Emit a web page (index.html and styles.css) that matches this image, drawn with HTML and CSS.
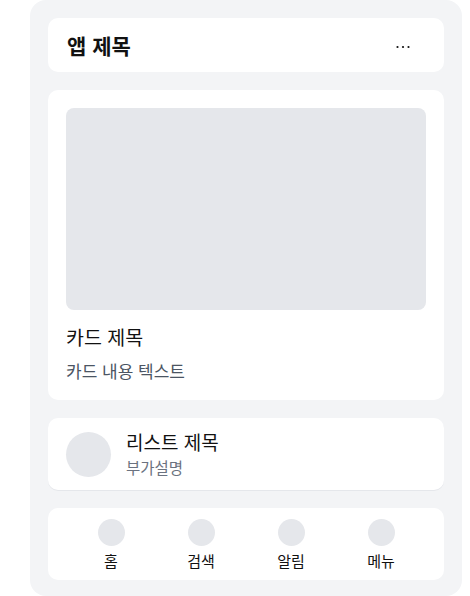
FILE: index.html
```html
<!DOCTYPE html>
<html lang="ko">
<head>
    <meta charset="UTF-8">
    <meta name="viewport" content="width=device-width, initial-scale=1.0">
    <title>앱 제목</title>
    <link rel="stylesheet" href="styles.css">
</head>
<body>
    <div class="app">
        <!-- Header -->
        <header class="panel header">
            <h1 class="header-title">앱 제목</h1>
            <svg class="header-more" width="14" height="4" viewBox="0 0 14 4">
                <circle cx="1.5" cy="2" r="1.1" fill="#111"/>
                <circle cx="7" cy="2" r="1.1" fill="#111"/>
                <circle cx="12.5" cy="2" r="1.1" fill="#111"/>
            </svg>
        </header>

        <!-- Main card -->
        <section class="panel card">
            <div class="card-image"></div>
            <h2 class="card-title">카드 제목</h2>
            <p class="card-text">카드 내용 텍스트</p>
        </section>

        <!-- List item -->
        <section class="panel list-item">
            <div class="avatar"></div>
            <div class="list-body">
                <div class="list-title">리스트 제목</div>
                <div class="list-sub">부가설명</div>
            </div>
        </section>

        <!-- Bottom navigation -->
        <nav class="panel bottom-nav">
            <div class="nav-item"><span class="nav-icon"></span><span class="nav-label">홈</span></div>
            <div class="nav-item"><span class="nav-icon"></span><span class="nav-label">검색</span></div>
            <div class="nav-item"><span class="nav-icon"></span><span class="nav-label">알림</span></div>
            <div class="nav-item"><span class="nav-icon"></span><span class="nav-label">메뉴</span></div>
        </nav>
    </div>
</body>
</html>
```

FILE: styles.css
```css
body {
    margin: 0;
    font-family: "Noto Sans CJK KR", "Noto Sans", sans-serif;
    background: #fff;
    color: #111;
}
.app {
    width: 396px;
    margin-left: 30px;
    padding: 18px 18px 16px;
    background: #f3f4f6;
    border-radius: 16px;
    display: flex;
    flex-direction: column;
    gap: 18px;
}
.panel {
    background: #fff;
    border-radius: 10px;
}
.header {
    height: 54px;
    padding: 0 34px 0 19px;
    display: flex;
    align-items: center;
    justify-content: space-between;
    box-sizing: border-box;
}
.header-title {
    margin: 0;
    font-size: 21px;
    line-height: 26px;
    font-weight: 700;
}
.header-more {
    display: block;
    margin-top: 4px;
}
.card {
    padding: 18px 18px 17px;
}
.card-image {
    height: 202px;
    background: #e5e7eb;
    border-radius: 8px;
}
.card-title {
    margin: 15px 0 0;
    font-size: 19.5px;
    font-weight: 400;
    line-height: 24px;
}
.card-text {
    margin: 10px 0 0;
    font-size: 17px;
    line-height: 24px;
    color: #4b5563;
}
.list-item {
    height: 72px;
    padding: 0 18px;
    display: flex;
    align-items: center;
    gap: 15px;
    box-sizing: border-box;
    box-shadow: 0 1px 0 #e5e7eb;
}
.avatar {
    width: 45px;
    height: 45px;
    border-radius: 50%;
    background: #e5e7eb;
}
.list-title {
    font-size: 19px;
    line-height: 24px;
}
.list-sub {
    font-size: 15.5px;
    line-height: 22px;
    color: #6b7280;
    margin-top: 2px;
}
.bottom-nav {
    height: 72px;
    padding: 0 18px;
    display: flex;
    align-items: center;
    box-sizing: border-box;
}
.nav-item {
    flex: 1;
    display: flex;
    flex-direction: column;
    align-items: center;
    gap: 6px;
}
.nav-icon {
    width: 27px;
    height: 27px;
    border-radius: 50%;
    background: #e5e7eb;
}
.nav-label {
    font-size: 15px;
    line-height: 18px;
}
```
